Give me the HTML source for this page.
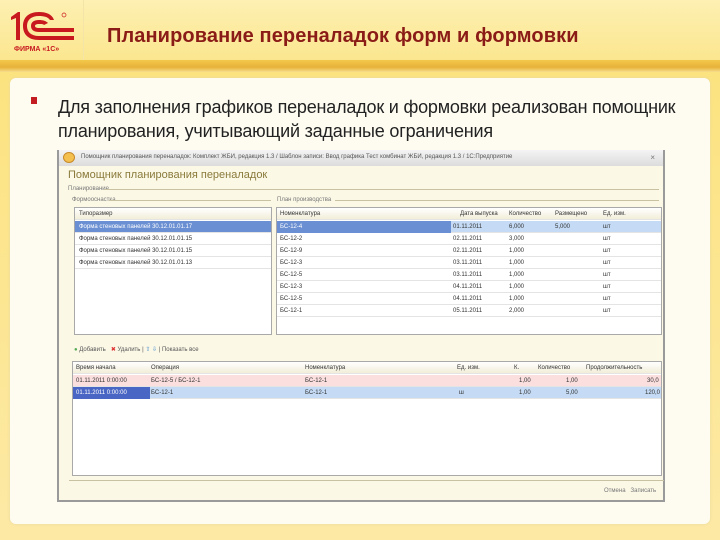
<!DOCTYPE html>
<html><head><meta charset="utf-8"><style>
*{margin:0;padding:0;box-sizing:border-box}
body{width:720px;height:540px;overflow:hidden;position:relative;background:linear-gradient(#fbe27a,#fde9a4 520px);font-family:"Liberation Sans",sans-serif}
.hdr{position:absolute;left:0;top:0;width:720px;height:62px;background:linear-gradient(#fdf0b2,#fbe68e)}
.band{position:absolute;left:0;top:60px;width:720px;height:12px;background:linear-gradient(#f3c84a,#e8b23a 60%,#f7dd8c)}
.div{position:absolute;left:83px;top:0;width:1px;height:60px;background:#f4e4a8}
.title{position:absolute;left:107px;top:25px;font-size:20px;font-weight:bold;color:#8a1b16;letter-spacing:0.1px}
.panel{position:absolute;left:10px;top:78px;width:700px;height:446px;background:#fefcf1;border-radius:6px;box-shadow:0 0 3px #e9d9a0}
.bul{position:absolute;left:31px;top:97px;width:6px;height:7px;background:#c31d22}
.txt{position:absolute;left:58px;top:95px;font-size:18px;line-height:24px;color:#222;letter-spacing:-0.2px}
.win{position:absolute;left:57px;top:150px;width:608px;height:352px;background:#fbf8e6;border:2px solid #9a9a9a;border-top:none}
.tb{position:absolute;left:0;top:0;width:604px;height:16px;background:linear-gradient(#f4f4f4,#dcdcdc);font-size:6px;color:#555;padding:4px 0 0 22px;white-space:nowrap;overflow:hidden}
.ic{position:absolute;left:4px;top:2px;width:12px;height:11px;border-radius:50%;background:#f4c050;border:1px solid #c88a2a}
.t{position:absolute;font-size:6px;color:#777;white-space:nowrap}
.tbl{position:absolute;background:#fff;border:1px solid #a9a9a9}
.row{position:absolute;left:0;right:0;height:12px;border-bottom:1px solid #e4e4e4;font-size:6px;color:#333;white-space:nowrap}
.row span{position:absolute;top:3px}
.h{background:linear-gradient(#fff,#f2eed9)}
.sel{background:#6a8fd2;color:#fff}
.sel2{background:#c5dbf5}
.pink{background:#fbdede}
.line{position:absolute;height:1px;background:#c8c2a2}
</style></head><body>
<div class="hdr"></div><div class="band"></div><div class="div"></div>
<svg style="position:absolute;left:10px;top:10px" width="66" height="32" viewBox="0 0 66 32">
<path d="M1 7 L8 2 L10 2 L10 30 L6 30 L6 8 L1 10Z" fill="#c8191f"/>
<path d="M44 10 C42 4 36 2 29 2 C18 2 13 8 13 16 C13 24 18 30 29 30 L64 30 L64 26 L29 26 C21 26 17 22 17 16 C17 10 21 6 29 6 C34 6 38 7 40 10Z" fill="#c8191f"/>
<path d="M38 13 C36 11 33 10 29 10 C24 10 21 12 21 16 C21 20 24 22 29 22 L64 22 L64 18 L29 18 C26 18 25 17 25 16 C25 15 26 14 29 14 C32 14 33 14 34 15Z" fill="#c8191f"/>
<circle cx="54" cy="5" r="2" fill="none" stroke="#c8191f" stroke-width=".7"/>
</svg>
<div style="position:absolute;left:14px;top:46px;font-size:7px;font-weight:bold;color:#c8191f">ФИРМА «1С»</div>
<div class="title">Планирование переналадок форм и формовки</div>
<div class="panel"></div>
<div class="bul"></div>
<div class="txt">Для заполнения графиков переналадок и формовки реализован помощник<br>планирования, учитывающий заданные ограничения</div>
<div class="win">
<div class="tb"><div class="ic"></div>Помощник планирования переналадок: Комплект ЖБИ, редакция 1.3 / Шаблон записи: Ввод графика Тест комбинат ЖБИ, редакция 1.3 / 1С:Предприятие</div>
<div class="t" style="right:8px;top:3px;font-size:8px">×</div>
<div class="t" style="left:9px;top:19px;font-size:11px;color:#8a7a3a">Помощник планирования переналадок</div>
<div class="t" style="left:9px;top:36px">Планирование</div><div class="line" style="left:45px;top:39px;width:555px"></div>
<div class="t" style="left:13px;top:47px">Формооснастка</div><div class="line" style="left:50px;top:50px;width:162px"></div>
<div class="t" style="left:218px;top:47px">План производства</div><div class="line" style="left:276px;top:50px;width:324px"></div>
<div class="tbl" style="left:15px;top:57px;width:198px;height:128px">
<div class="row h" style="top:0"><span style="left:4px">Типоразмер</span></div>
<div class="row sel" style="top:13px"><span style="left:4px">Форма стеновых панелей 30.12.01.01.17</span></div>
<div class="row" style="top:25px"><span style="left:4px">Форма стеновых панелей 30.12.01.01.15</span></div>
<div class="row" style="top:37px"><span style="left:4px">Форма стеновых панелей 30.12.01.01.15</span></div>
<div class="row" style="top:49px"><span style="left:4px">Форма стеновых панелей 30.12.01.01.13</span></div>
</div>
<div class="tbl" style="left:217px;top:57px;width:386px;height:128px">
<div class="row h" style="top:0"><span style="left:3px">Номенклатура</span><span style="left:183px">Дата выпуска</span><span style="left:232px">Количество</span><span style="left:278px">Размещено</span><span style="left:326px">Ед. изм.</span></div>
<div class="row sel2" style="top:13px"><div style="position:absolute;left:0;top:0;width:174px;height:12px;background:#6a8fd2"></div><span style="left:3px;color:#fff">БС-12-4</span><span style="left:176px">01.11.2011</span><span style="left:232px">6,000</span><span style="left:278px">5,000</span><span style="left:326px">шт</span></div>
<div class="row" style="top:25px"><span style="left:3px">БС-12-2</span><span style="left:176px">02.11.2011</span><span style="left:232px">3,000</span><span style="left:326px">шт</span></div>
<div class="row" style="top:37px"><span style="left:3px">БС-12-9</span><span style="left:176px">02.11.2011</span><span style="left:232px">1,000</span><span style="left:326px">шт</span></div>
<div class="row" style="top:49px"><span style="left:3px">БС-12-3</span><span style="left:176px">03.11.2011</span><span style="left:232px">1,000</span><span style="left:326px">шт</span></div>
<div class="row" style="top:61px"><span style="left:3px">БС-12-5</span><span style="left:176px">03.11.2011</span><span style="left:232px">1,000</span><span style="left:326px">шт</span></div>
<div class="row" style="top:73px"><span style="left:3px">БС-12-3</span><span style="left:176px">04.11.2011</span><span style="left:232px">1,000</span><span style="left:326px">шт</span></div>
<div class="row" style="top:85px"><span style="left:3px">БС-12-5</span><span style="left:176px">04.11.2011</span><span style="left:232px">1,000</span><span style="left:326px">шт</span></div>
<div class="row" style="top:97px"><span style="left:3px">БС-12-1</span><span style="left:176px">05.11.2011</span><span style="left:232px">2,000</span><span style="left:326px">шт</span></div>
</div>
<div class="t" style="left:15px;top:196px;color:#555"><span style="color:#5a5">●</span> Добавить &nbsp; <span style="color:#d33">✖</span> Удалить | <span style="color:#48c">⇧ ⇩</span> | Показать все</div>
<div class="tbl" style="left:13px;top:211px;width:590px;height:115px">
<div class="row h" style="top:0"><span style="left:3px">Время начала</span><span style="left:78px">Операция</span><span style="left:232px">Номенклатура</span><span style="left:384px">Ед. изм.</span><span style="left:441px">К.</span><span style="left:465px">Количество</span><span style="left:513px">Продолжительность</span></div>
<div class="row pink" style="top:13px"><span style="left:3px">01.11.2011 0:00:00</span><span style="left:78px">БС-12-5 / БС-12-1</span><span style="left:232px">БС-12-1</span><span style="left:446px">1,00</span><span style="left:493px">1,00</span><span style="left:574px">30,0</span></div>
<div class="row sel2" style="top:25px"><div style="position:absolute;left:0;top:0;width:77px;height:12px;background:#4a66c4"></div><span style="left:3px;color:#fff">01.11.2011 0:00:00</span><span style="left:78px">БС-12-1</span><span style="left:232px">БС-12-1</span><span style="left:386px">ш</span><span style="left:446px">1,00</span><span style="left:493px">5,00</span><span style="left:572px">120,0</span></div>
</div>
<div class="line" style="left:10px;top:330px;width:595px"></div>
<div class="t" style="left:545px;top:338px">Отмена &nbsp; Записать</div>
</div>
</body></html>
